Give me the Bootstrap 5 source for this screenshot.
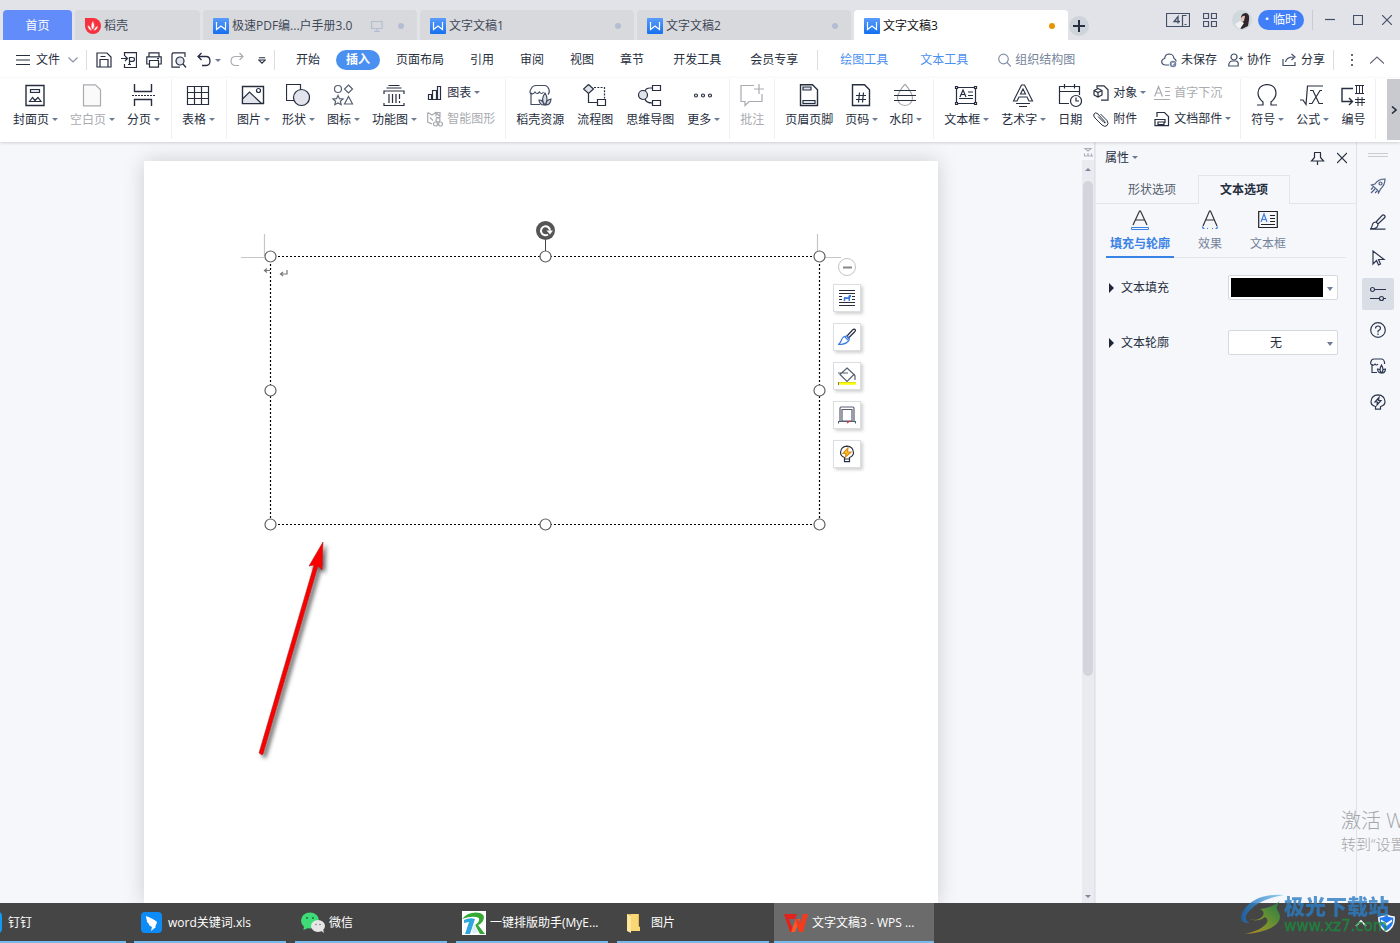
<!DOCTYPE html>
<html lang="zh-CN">
<head>
<meta charset="utf-8">
<meta name="viewport" content="width=device-width, initial-scale=1">
<title>文字文稿3</title>
<link href="https://cdn.jsdelivr.net/npm/bootstrap@5.3.0/dist/css/bootstrap.min.css" rel="stylesheet">
<style>
:root{--ink:#262e40;--line:#e3e5ea;--accent:#3b82e6}
body{font-family:"Open Sans","Noto Sans CJK SC",sans-serif;font-size:12px;line-height:20px;color:var(--ink);background:#f5f7fa;overflow:hidden}
svg{display:block;flex:none;fill:none}
svg:not([stroke]){stroke:currentColor}
svg:not([stroke-width]){stroke-width:1.2}
svg[fill]{fill:#667}
.btn{--bs-btn-padding-x:0;--bs-btn-padding-y:0;--bs-btn-font-size:12px;--bs-btn-border-width:0;--bs-btn-border-radius:0;--bs-btn-color:var(--ink);line-height:20px;white-space:nowrap;flex:none}
.caret::after{content:"";display:inline-block;margin-left:3px;border:3px solid transparent;border-top:3px solid #6d7b94;border-bottom:0;vertical-align:3px;margin-right:-1px}
.off{--bs-btn-color:#a9abb0}
/* title bar */
.titlebar{background:#e1e3e8;height:40px;padding-left:3px;gap:3px}
.doc-tab{height:30px;background:#d8d9dd;border-radius:4px 4px 0 0;padding:2px 13px 0 10px;gap:3px;flex:0 1 214px;color:#3f4858;text-align:left;white-space:nowrap}
.doc-tab.home{flex-basis:69px;background:#618cfa;color:#fff;padding:2px 0 0;text-align:center}
.doc-tab.store{flex-basis:125px}
.doc-tab.current{background:#fff;color:#111}
.dot{width:6px;height:6px;border-radius:50%;background:#b5bdd3}
.current .dot{background:#e69500}
.plus{width:20px;height:20px;border-radius:50%;background:#cfd3da;margin-left:-2px}
.win{height:40px;padding-right:8px;color:#44506a}
.win .grid4{margin:0 15px 0 13px}
.win .sep{margin:0 12px 0 8px;background:#c9ccd3}
.win .max{margin:0 19px 0 18px}
.trial{background:#417ff9;color:#fff;border-radius:10px;padding:0 7px 0 3px;height:20px;margin-left:6px}
.vr-line{width:1px;height:20px;background:#dcdee2;flex:none}
/* menu */
.menubar{height:38px;background:#fff;padding:2px 16px 0}
.file-sep{margin:0 9px 0 8px}
.quick{gap:9px}
.quick-sep{margin:0 8px}
.tool-sep{margin:0 6px}
.menu-tab{color:var(--ink);text-decoration:none;padding:0 13px;white-space:nowrap}
.menu-tab.on{background:#4a90f0;color:#fff;font-weight:700;border-radius:10px;padding:0 10px;margin:0 3px}
.menu-tab.wide{margin-left:3px}
.menu-tab.tool{color:#4a90f0;padding:0 16px}
.search-box{margin-left:14px;gap:4px}
.find{width:64px;border:0;padding:0;background:none;color:#76839b;height:20px;outline:0}
.cloud{gap:11px}
/* ribbon */
.ribbon{height:64px;background:#fff;padding:1px 0 3px 3px;box-shadow:0 1px 3px rgba(0,0,0,.16);position:relative;z-index:2}
.grp{height:60px;padding:5px 12px 0 10px;gap:13px;border-right:1px solid #eff0f2;flex:none}
.grp.g12{gap:12px}
.grp.short{padding-right:10px}
.big{display:flex;flex-direction:column;align-items:center;gap:2px}
.mini{display:flex;align-items:center;gap:4px;height:26px}
.mini svg{width:16px;height:16px}
.stack{margin:-4px -2px 0}
.more{width:13px;height:61px;background:#c8cad0}
/* workspace */
.sheet{width:794px;margin-top:19px;background:#fff;box-shadow:0 0 20px rgba(0,0,0,.17);position:relative}
.marks{position:absolute;left:0;top:0}
.float-tools{position:absolute;left:689px;top:97px;gap:11px}
.float-tools .btn{width:28px;height:28px;background:#fff;border:1px solid #dcdee2;box-shadow:2px 2px 3px rgba(0,0,0,.18)}
.float-tools .fold{width:18px;height:18px;border-radius:50%;border:1px solid #c4c4c4;box-shadow:none;margin-bottom:-3px}
.scroller{width:13px;background:#e9ebf0;border-right:1px solid #dfe1e6}
.ruler-btn{width:12px;background:#f5f7fa}
.thumb{width:10px;height:495px;border-radius:5px;background:#d3d5dc}
/* properties */
.props{width:261px;background:#f5f7fa;border-left:1px solid #e8eaee}
.phead{height:34px;padding:4px 5px 6px 9px}
.ptabs{height:29px;border-bottom:1px solid var(--line);padding-left:102px;margin-top:-1px}
.ptabs .btn{height:29px}
.ptabs .idle{width:92px;margin-left:-92px;--bs-btn-color:#555e6d}
.ptabs .cur{width:92px;border:1px solid var(--line);border-bottom:0;background:#f5f7fa;font-weight:700}
.sub{margin:0 10px;height:54px;border-bottom:1px solid var(--line);gap:24px}
.sub .btn{color:#76839b;height:54px;padding-top:5px;gap:3px}
.sub .sel{color:var(--accent);font-weight:700;padding-left:4px;padding-right:4px;border-bottom:2px solid var(--accent)}
.prop-list{padding:17px 18px 0 13px;gap:30px}
.prop-row{height:25px;gap:7px}
.pick{width:110px;height:25px;border:1px solid #d5d8de;border-radius:2px;background:#fff;position:relative}
.pick select{appearance:none;border:0;background:none;width:100%;height:23px;padding:0 14px 0 0;text-align-last:center;color:var(--ink);font-size:12px}
.pick::after{content:"";position:absolute;right:4px;top:11px;border:3px solid transparent;border-top:4px solid #6d7b94;border-bottom:0;pointer-events:none}
.swatch{width:92px;height:19px;margin:2px;background:#000}
.tri{border:5px solid transparent;border-left:5px solid #1f2737;border-right:0}
.rail{width:44px;border-left:1px solid #e0e3e9;background:#f5f7fa;padding:11px 1px 0 0;gap:4px}
.rail .btn{width:32px;height:32px;border-radius:2px;--bs-btn-color:#2d3850}
.rail .act{background:#d9dde5}
.grip{width:20px;height:4px;border:1px solid #c9ccd2;border-width:1px 0;margin-bottom:9px}
/* overlays */
.activate{position:absolute;right:0;top:809px;width:59px;overflow:hidden;white-space:nowrap;color:#a4a6aa;z-index:3;font-size:15px;font-weight:300;line-height:22px;pointer-events:none}
.activate .head{font-size:20px;line-height:24px}
.stamp{position:absolute;right:11px;bottom:8px;z-index:4;opacity:.8;pointer-events:none}
.stamp .cn{font:900 21px/24px "Noto Sans CJK SC",sans-serif;color:#2b7cc4}
.stamp .en{font:400 15px/18px "DejaVu Sans","Liberation Sans",sans-serif;color:#1b8d3d;-webkit-text-stroke:.5px #1b8d3d}
/* taskbar */
.taskbar{height:40px;background:#454545;overflow:hidden;padding-right:5px}
.taskbar .btn{--bs-btn-color:#fff;--bs-btn-hover-color:#fff;height:40px;width:152px;margin-left:9px;padding:2px 0 0 6px;gap:4px;border-bottom:2px solid #76b9ed;text-align:left}
.taskbar .btn:first-child{margin-left:-26px;margin-right:-1px}
.taskbar .front{width:160px;background:#6b6b6b;margin-left:5px;padding-left:10px}
.tray{gap:11px}
</style>
</head>
<body>
<svg width="0" height="0" class="position-absolute">
 <defs><linearGradient id="wg" x1="0" y1="0" x2="0" y2="1"><stop offset="0" stop-color="#5a9cfb"/><stop offset="1" stop-color="#1670ee"/></linearGradient>
 <linearGradient id="sw" x1="0" y1="0" x2="1" y2="0"><stop offset="0" stop-color="#1565b4"/><stop offset="1" stop-color="#7cc8f2"/></linearGradient>
 <linearGradient id="sg" x1="0" y1="1" x2="1" y2="0"><stop offset="0" stop-color="#d4a017"/><stop offset=".5" stop-color="#7aa52c"/><stop offset="1" stop-color="#1b8a4a"/></linearGradient></defs>
 <symbol id="wdoc" viewBox="0 0 16 16"><rect width="16" height="16" rx="1" fill="url(#wg)" stroke="none"/><path d="M3.500 4v7.500L8 8l4.500 3.500V4" stroke="#fff" stroke-width="1.200"/></symbol>
</svg>
<div class="vh-100 d-flex flex-column position-relative overflow-hidden">

<header class="titlebar d-flex align-items-end">
 <button class="btn doc-tab home">首页</button>
 <button class="btn doc-tab store d-flex align-items-center"><svg width="16" height="16" viewBox="0 0 16 16"><path d="M0 0h8a8 8 0 1 1-8 8z" fill="#f6303d" stroke="none"/><path d="M8 12Q4 9 8 2.500 11 8 8 12zM7 13Q2.500 12 2.500 7 6 8 7 13zM8.500 13Q9 9 13 7.500 13 12 8.500 13z" fill="#fff" stroke="#f6303d" stroke-width=".6"/></svg><span>稻壳</span></button>
 <button class="btn doc-tab d-flex align-items-center"><svg width="16" height="16"><use href="#wdoc"/></svg><span>极速PDF编...户手册3.0</span><svg class="ms-auto me-2" width="12" height="12" viewBox="0 0 12 12" stroke="#b5bdd3"><path d="M.6 1.500h10.500v7H.6zM6 8.500v2.500M3 11.400h6"/></svg><i class="dot ms-1"></i></button>
 <button class="btn doc-tab d-flex align-items-center"><svg width="16" height="16"><use href="#wdoc"/></svg><span>文字文稿1</span><i class="dot ms-auto"></i></button>
 <button class="btn doc-tab d-flex align-items-center"><svg width="16" height="16"><use href="#wdoc"/></svg><span>文字文稿2</span><i class="dot ms-auto"></i></button>
 <button class="btn doc-tab current d-flex align-items-center"><svg width="16" height="16"><use href="#wdoc"/></svg><span>文字文稿3</span><i class="dot ms-auto"></i></button>
 <button class="btn plus mb-1 d-flex align-items-center justify-content-center" aria-label="新建"><svg width="12" height="12" viewBox="0 0 12 12" stroke-width="2"><path d="M6 0v12M0 6h12"/></svg></button>
 <div class="win d-flex align-items-center ms-auto">
  <svg width="24" height="14" viewBox="0 0 24 14"><path d="M16 13.500H.5V.5h23v13H16.500V2.500h4M18.500 11.500h2"/><path d="M12 10.500v-7L8 8.500h6" stroke-width="1.300"/></svg>
  <svg class="grid4" width="14" height="14" viewBox="0 0 14 14"><path d="M.5.5h5v5h-5zM8.500.5h5v5h-5zM.5 8.500h5v5h-5zM8.500 8.500h5v5h-5z"/></svg>
  <svg width="20" height="20" viewBox="0 0 20 20" stroke="none"><circle cx="10" cy="10" r="10" fill="#cfd8dd"/><path d="M9 7q1-4 5-4 4 1 3 7l-1 6-6 3-3-1 4-5z" fill="#30262b"/><path d="M9 8q2-3 4-2l-1 5-3 1z" fill="#e8c3b5"/><path d="M3 14l5-3 4 2-4 6q-3-1-5-5z" fill="#f0f1f4"/></svg>
  <button class="btn trial">・临时</button>
  <span class="vr-line sep"></span>
  <svg width="10" height="10" viewBox="0 0 10 10"><path d="M0 4.500h10"/></svg>
  <svg class="max" width="10" height="10" viewBox="0 0 10 10"><path d="M.5.5h9v9h-9z"/></svg>
  <svg width="10" height="10" viewBox="0 0 10 10"><path d="M0 0l10 10M10 0L0 10"/></svg>
 </div>
</header>

<nav class="menubar d-flex align-items-center">
 <button class="btn d-flex align-items-center"><svg class="me-1" width="16" height="12" viewBox="0 0 16 12"><path d="M0 1.500h14M0 6h14M0 10.500h14"/></svg>文件<svg class="ms-2" width="10" height="6" viewBox="0 0 10 6" stroke="#8b93a3"><path d="M.5.5L5 5 9.500.5"/></svg></button>
 <span class="vr-line file-sep"></span>
 <div class="quick d-flex align-items-center">
  <button class="btn" aria-label="保存"><svg width="16" height="16" viewBox="0 0 16 16"><path d="M1 1h10l4 4v10H1zM4 15V7.500h8V15M4.500 4.500h5"/></svg></button>
  <button class="btn" aria-label="输出为PDF"><svg width="16" height="16" viewBox="0 0 16 16"><path d="M3.500 4V.6h12v15h-12V12M0 6.500h6.500M4 4l2.500 2.500L4 9M7 12.500h3M8.500 12V5.500h3q2 0 2 1.800 0 2-2 2h-3"/></svg></button>
  <button class="btn" aria-label="打印"><svg width="16" height="16" viewBox="0 0 16 16"><path d="M3 4.500V.8h10v3.700M3.500 12H.8V4.800h14.400V12h-2.700M3.500 8.500h9v6.700h-9zM11 6.700h2"/></svg></button>
  <button class="btn" aria-label="打印预览"><svg width="16" height="16" viewBox="0 0 16 16"><path d="M14 5V.8H2L1 2v13.200h8"/><circle cx="9" cy="9" r="4" fill="#e1e4ea"/><path d="M12 12l3 3.500"/></svg></button>
  <button class="btn d-flex align-items-center caret" aria-label="撤销"><svg width="16" height="16" viewBox="0 0 16 16" stroke-width="1.300"><path d="M5.500 1L2 4.500 5.500 8M2 4.500h8q4 0 4 4.500t-4 4.500H6"/></svg></button>
  <button class="btn off" aria-label="恢复"><svg width="16" height="16" viewBox="0 0 16 16"><path d="M10.500 1L14 4.500 10.500 8M14 4.500H7q-5 0-5 4.500t5 4.500h3"/></svg></button>
  <button class="btn ms-1" aria-label="自定义"><svg width="8" height="9" viewBox="0 0 9 9"><path d="M1 1.500h7M1 4l3.500 3.500L8 4z"/></svg></button>
 </div>
 <span class="vr-line quick-sep"></span>
 <a class="menu-tab" href="#">开始</a><a class="menu-tab on" href="#">插入</a><a class="menu-tab" href="#">页面布局</a><a class="menu-tab" href="#">引用</a><a class="menu-tab" href="#">审阅</a><a class="menu-tab" href="#">视图</a><a class="menu-tab" href="#">章节</a><a class="menu-tab wide" href="#">开发工具</a><a class="menu-tab wide" href="#">会员专享</a>
 <span class="vr-line tool-sep"></span>
 <a class="menu-tab tool" href="#">绘图工具</a><a class="menu-tab tool" href="#">文本工具</a>
 <label class="search-box d-flex align-items-center"><svg width="13" height="14" viewBox="0 0 13 14" stroke="#8490a6"><circle cx="5.500" cy="6" r="4.800"/><path d="M9 9.500l4 4"/></svg><input class="find" type="text" value="组织结构图" aria-label="查找命令"></label>
 <div class="cloud d-flex align-items-center ms-auto">
  <button class="btn d-flex align-items-center gap-1"><svg width="16" height="16" viewBox="0 0 16 16" stroke="#44506a"><path d="M8 13H4Q.7 12.500.7 9.500q.3-2.500 3-3Q4 2 8.500 2q4 .3 4.500 4.500 2 .7 2.200 3"/><circle cx="12" cy="12" r="3.300" fill="#7180a0" stroke="none"/><path d="M10.700 10.700l2.600 2.600M13.300 10.700l-2.600 2.600" stroke="#fff"/></svg>未保存</button>
  <button class="btn d-flex align-items-center gap-1"><svg width="15" height="14" viewBox="0 0 15 14" stroke="#44506a"><circle cx="6" cy="4" r="3"/><path d="M.7 13q0-5 4-5h3q2 0 2.500 2v3zM11 5.500h4M13 3.500v4"/></svg>协作</button>
  <button class="btn d-flex align-items-center gap-1"><svg width="15" height="14" viewBox="0 0 15 14" stroke="#44506a"><path d="M1 6v6.500h12V9M3.500 9q1-5 8-5M9.500 1L13 4l-3.500 3"/></svg>分享</button>
 </div>
 <span class="vr-line mx-2"></span>
 <button class="btn mx-2" aria-label="更多"><svg width="4" height="14" viewBox="0 0 4 14" stroke="none" fill="#667"><path d="M1 1h2v2H1zM1 6h2v2H1zM1 11h2v2H1z"/></svg></button>
 <button class="btn ms-2" aria-label="收起"><svg width="14" height="8" viewBox="0 0 14 8" stroke="#667"><path d="M0 7.500L7 1l7 6.500"/></svg></button>
</nav>

<div class="ribbon d-flex">
 <div class="grp d-flex align-items-start">
  <button class="btn big"><svg width="24" height="24" viewBox="0 0 24 24"><path d="M3 1.500h18v20H3z" stroke-width="1.400"/><path d="M7.500 5.500h9v3h-9z" fill="#e1e4ea"/><path d="M6.500 17.500l3-4 2.500 3 3-3 3 4z"/></svg><span class="caret">封面页</span></button>
  <button class="btn big off"><svg width="24" height="24" viewBox="0 0 24 24"><path d="M3.500.8h12l5 5v16h-17z" fill="#fafafa"/></svg><span class="caret">空白页</span></button>
  <button class="btn big"><svg width="24" height="24" viewBox="0 0 24 24"><path d="M3.500 0v7.500h17V0M3.500 22v-6.500h17V22" stroke-width="1.400"/><path d="M1 11.500h23" stroke-dasharray="2 1"/></svg><span class="caret">分页</span></button>
 </div>
 <div class="grp d-flex align-items-start">
  <button class="btn big"><svg width="24" height="24" viewBox="0 0 24 24"><path d="M1.500 2.500h21v18h-21zM1.500 8.500h21M1.500 14.500h21M8.500 2.500v6M15.500 2.500v6M8.500 8.500v12M15.500 8.500v12"/></svg><span class="caret">表格</span></button>
 </div>
 <div class="grp d-flex align-items-start">
  <button class="btn big"><svg width="24" height="24" viewBox="0 0 24 24"><path d="M1.500 2.500h21v17h-21z" stroke-width="1.400"/><path d="M1.500 15l7-7 12 11.500h-19z" fill="#e1e4ea"/><circle cx="17.500" cy="6.500" r="2"/></svg><span class="caret">图片</span></button>
  <button class="btn big"><svg width="24" height="24" viewBox="0 0 24 24"><path d="M.5.5h14v16H.5z"/><circle cx="15.500" cy="13.500" r="8" fill="#e1e4ea"/></svg><span class="caret">形状</span></button>
  <button class="btn big"><svg width="24" height="24" viewBox="0 0 24 24" stroke="#555f70"><circle cx="7" cy="5" r="3.500"/><path d="M17.500 1l4 4-4 4-4-4zM17.500 12.500l4 7.500h-8zM7 11.500l1.500 3.200 3.500.3-2.600 2.300.8 3.400L7 19l-3.200 1.700.8-3.400L2 15l3.500-.3z"/></svg><span class="caret">图标</span></button>
  <button class="btn big"><svg width="24" height="24" viewBox="0 0 24 24"><path d="M6.500 1.500h11M4.500 4h15M2 10V7h20v3M2 19v2.500h20V19M7 10v9M10.500 10v9M14 10v9M17.500 10v5M17.500 17v2"/></svg><span class="caret">功能图</span></button>
  <div class="stack d-flex flex-column"><button class="btn mini"><svg viewBox="0 0 16 16"><path d="M1.500 9.500h3v5h-3zM5.500 5.500h4v9h-4zM10.500 1.500h3v13h-3z"/></svg><span class="caret">图表</span></button><button class="btn mini off"><svg viewBox="0 0 16 16"><path d="M.7 1.500L5 4l4-2.500v4M.7 1.500v9.500L5 13M3 6.500l3 3M9 6.500h4V1.500H9l4 4"/><circle cx="11" cy="9" r="2"/><circle cx="8.500" cy="13" r="2"/><circle cx="13.500" cy="13" r="2"/></svg><span>智能图形</span></button></div>
 </div>
 <div class="grp short d-flex align-items-start">
  <button class="btn big"><svg width="24" height="24" viewBox="0 0 24 24" stroke="#454e60"><path d="M3 10v10.500h9M3 10q-2-2 0-5Q4.500 1.500 8 1.500h9q3 .5 4 4 1 3-1 5M3 9q2 2 4-1 2 3 4.500 0 2 3 4 0"/><path d="M17 21q-5-5 0-12 4 6 0 12zM16 21q-4.500 0-5-5 4 0 5 5zM18 21q4.500 0 5-6-5 1-5 6z" fill="#d9dde5"/></svg><span>稻壳资源</span></button>
  <button class="btn big"><svg width="24" height="24" viewBox="0 0 24 24"><path d="M5.500.5l5 4.500-5 4.500L.5 5z" fill="#e1e4ea"/><path d="M5.500 9.500v9h9M14.500 15.500h8v6h-8z"/><path d="M11 3.500h10.500v11" stroke-dasharray="2 1.300"/></svg><span>流程图</span></button>
  <button class="btn big"><svg width="24" height="24" viewBox="0 0 24 24"><circle cx="5" cy="11" r="4.500" fill="#e1e4ea"/><path d="M14.500 1.500h8v5h-8zM14.500 16.500h8v5h-8z"/><path d="M14.500 4H12Q8 4 7 7M7 15q1 4 7.500 4"/></svg><span>思维导图</span></button>
  <button class="btn big"><svg width="24" height="24" viewBox="0 0 24 24"><circle cx="5" cy="11.500" r="1.500"/><circle cx="12" cy="11.500" r="1.500"/><circle cx="19" cy="11.500" r="1.500"/></svg><span class="caret">更多</span></button>
 </div>
 <div class="grp short d-flex align-items-start">
  <button class="btn big off"><svg width="24" height="24" viewBox="0 0 24 24"><path d="M14 1.500H1v16h4v4l4-4h13V10M19 0v10M14 5h10"/></svg><span>批注</span></button>
 </div>
 <div class="grp g12 d-flex align-items-start">
  <button class="btn big"><svg width="24" height="24" viewBox="0 0 24 24"><path d="M3.500.8h12l5 5v15.700h-17z" stroke-width="1.400"/><path d="M6 3h8v3H6zM6 16.500h12v3H6z" fill="#e1e4ea"/></svg><span>页眉页脚</span></button>
  <button class="btn big"><svg width="24" height="24" viewBox="0 0 24 24"><path d="M3.500.8h12l5 5v15.700h-17z" stroke-width="1.400"/><path d="M7 11.500h10M7 15.500h10M10.500 8.500l-1 10M14.500 8.500l-1 10"/></svg><span class="caret">页码</span></button>
  <button class="btn big"><svg width="24" height="24" viewBox="0 0 24 24"><path d="M12 0q-8 9.500-7.500 14.500Q5.500 21 12 21.500q6.500-.5 7.500-7Q20 9.500 12 0z" stroke="#a9abb0"/><path d="M1 6.500h22M1 11.500h22M1 16.500h22"/></svg><span class="caret">水印</span></button>
 </div>
 <div class="grp d-flex align-items-start">
  <button class="btn big"><svg width="24" height="24" viewBox="0 0 24 24"><path d="M3 3.500h18M3 19.500h18M2.500 4v15M21.500 4v15M14 8h5M14 11.500h5M5 14.500h14" /><path d="M6 13l3-7 3 7M7 10.500h4"/><path d="M1.500 2.500h2v2h-2zM20.500 2.500h2v2h-2zM1.500 18.500h2v2h-2zM20.500 18.500h2v2h-2z" fill="#fff"/></svg><span class="caret">文本框</span></button>
  <button class="btn big"><svg width="24" height="24" viewBox="0 0 24 24"><path d="M2.500 17L10.500 1h3l8 16H18l-2-4H8l-2 4zM9.500 10h5L12 5z" stroke-width="1.100"/><path d="M5 19.500h14M8 22.500h8"/></svg><span class="caret">艺术字</span></button>
  <button class="btn big"><svg width="24" height="24" viewBox="0 0 24 24"><path d="M11 19.500H1.500v-17h20V11M1.500 7.500h20M6.500 0v4.500M16.500 0v4.500"/><circle cx="18" cy="17" r="5.500"/><path d="M18 13.500V17h3"/></svg><span>日期</span></button>
  <div class="stack d-flex flex-column"><button class="btn mini"><svg viewBox="0 0 16 16"><path d="M4 3V.8h7l4 4v10.400H8"/><path d="M5 3.500l4 2v4.500l-4 2-4-2V5.500zM1 5.500l4 2 4-2M5 7.500V12"/></svg><span class="caret">对象</span></button><button class="btn mini"><svg viewBox="0 0 16 16" stroke-width="1"><path d="M5 5.500l6 6q2 1.500.7-1L5 3Q2.500.5 1 3 0 5 2 7l7 7q3 2.500 5 .5 2-2 0-5L7.500 3"/></svg><span>附件</span></button></div>
  <div class="stack d-flex flex-column"><button class="btn mini off"><svg viewBox="0 0 16 16"><path d="M.7 11.500L4.500 1.500l4 10M2 8h5M11 2.500h5M11 6.500h5M11 10.500h5M0 14.500h16"/></svg><span>首字下沉</span></button><button class="btn mini"><svg viewBox="0 0 16 16"><path d="M3 6V1.500h7.500l4 4v9.200H1V11M1 11V8.500h10V12M4 11h6v2.500H4z"/></svg><span class="caret">文档部件</span></button></div>
 </div>
 <div class="grp short d-flex align-items-start">
  <button class="btn big"><svg width="24" height="24" viewBox="0 0 24 24"><path d="M2 21h6v-3Q3 14 3 9q.5-8 9-8.500Q20.500 1 21 9q0 5-5 9v3h6"/></svg><span class="caret">符号</span></button>
  <button class="btn big"><svg width="24" height="24" viewBox="0 0 24 24"><path d="M0 16h3l3 4.500L7.500 2H23M10 6.500h3l6 13h4M22 6.500h-2L12 19.500h-3"/></svg><span class="caret">公式</span></button>
  <button class="btn big"><svg width="24" height="24" viewBox="0 0 24 24"><path d="M12 4.500H1v13h10M8 14l3.500 3.500L8 21" stroke-width="1.400"/><path d="M14 1.500h9M14 9.500h9M15.500 1.500v8M18.500 1.500v8M21.500 1.500v8M14 15.500h10M14 18.500h10M17 13v9M21 13v9" stroke-width="1"/></svg><span>编号</span></button>
 </div>
 <button class="btn more ms-auto d-flex align-items-center justify-content-center" aria-label="向右滚动"><svg width="6" height="8" viewBox="0 0 6 8" stroke-width="1.600"><path d="M1 .5L5 4 1 7.500"/></svg></button>
</div>

<div class="d-flex flex-fill overflow-hidden">
 <main class="flex-fill d-flex justify-content-center overflow-hidden">
  <div class="sheet">
   <svg class="marks" width="794" height="742" viewBox="0 0 794 742">
    <defs><filter id="sh" x="-50%" y="-10%" width="250%" height="120%"><feDropShadow dx="3" dy="3" stdDeviation="2" flood-opacity=".6"/></filter></defs>
    <path d="M97 96.500h23M120.500 73v22M673.500 73v22M680 96.500h17" stroke="#c6c6c6"/>
    <path d="M126 95.500h550M126 363.500h550M126.500 95v268M675.500 95v268" stroke="#000" stroke-dasharray="2 2"/>
    <path d="M401.500 79v12" stroke="#444" stroke-width="1"/>
    <g fill="#fff" stroke="#606060"><circle cx="126.500" cy="95.500" r="5.500"/><circle cx="401.500" cy="95.500" r="5.500"/><circle cx="675.500" cy="95.500" r="5.500"/><circle cx="126.500" cy="229.500" r="5.500"/><circle cx="675.500" cy="229.500" r="5.500"/><circle cx="126.500" cy="363.500" r="5.500"/><circle cx="401.500" cy="363.500" r="5.500"/><circle cx="675.500" cy="363.500" r="5.500"/></g>
    <circle cx="401.500" cy="69.500" r="9.500" fill="#555" stroke="none"/><path d="M404 73.500a4.500 4.500 0 1 1 2-4" stroke="#fff" stroke-width="2"/><path d="M402.500 69.500h6.500l-3 4z" fill="#fff" stroke="none"/>
    <path d="M126 109.500h-5M123 107.500l-2.500 2 2.500 2M143 109v4h-6M139 111l-2.500 2 2.500 2" stroke="#777"/>
    <g filter="url(#sh)" fill="#fb0505" stroke="none"><path d="M179 381l-14 24 5-1-55 188 3 2 1-1 55-188 4 4z" stroke="#9c1010" stroke-width=".5"/></g>
   </svg>
   <div class="float-tools d-flex flex-column align-items-center">
    <button class="btn fold d-flex align-items-center justify-content-center" aria-label="收起"><svg width="9" height="3" viewBox="0 0 9 3"><path d="M0 1.500h9" stroke="#888" stroke-width="2"/></svg></button>
    <button class="btn d-flex align-items-center justify-content-center" aria-label="布局选项"><svg width="18" height="18" viewBox="0 0 18 18"><path d="M1 1.500h16M1 4.500h16M1 7.500h3M1 10.500h3M14 7.500h3M14 10.500h3M1 13.500h16M1 16.500h16"/><path d="M5.500 12l.5-4 4 .3L11 6h2v2l-1 .5V12h-1.500V10L7.500 10l-.5 2z" fill="#3b7ddd" stroke="none"/></svg></button>
    <button class="btn d-flex align-items-center justify-content-center" aria-label="形状样式"><svg width="18" height="18" viewBox="0 0 18 18"><path d="M9 8l5.500-6q2-1.500 2.500-.5 1 1-.5 2.500l-6 6z"/><path d="M9 8L11 10q1 1.500-1 3.500-3 3-9.500 3 2-1.500 3-4.500Q5 8 9 8zM7 9l3 3" stroke="#3b7ddd"/></svg></button>
    <button class="btn d-flex align-items-center justify-content-center" aria-label="形状填充"><svg width="18" height="18" viewBox="0 0 18 18"><path d="M9 1l7 6.500-7 7-7-7zM0 6h10M16 7l1 2v4" stroke="#555e70"/><path d="M0 15.500h18M.5 15v3" stroke="#777"/><path d="M1 16.500h17" stroke="#ff0" stroke-width="2.500"/></svg></button>
    <button class="btn d-flex align-items-center justify-content-center" aria-label="形状轮廓"><svg width="18" height="18" viewBox="0 0 18 18"><path d="M2 15V2.500q0-1.500 1-1.500h12q1 0 1 1.500V15M4 15V3.500h10V15zM0 15.500h18M.5 15v2.500M17.500 15v2.500" stroke="#555e70"/><path d="M9 17l3-2" stroke="#e33"/></svg></button>
    <button class="btn d-flex align-items-center justify-content-center" aria-label="智能推荐"><svg width="18" height="18" viewBox="0 0 18 18"><path d="M6.500 14v-1.500Q2.500 11 2.500 7.500 3 1.500 9 1.200q6 .3 6.500 6.300 0 3.500-4 5V14zM6.500 14v2.700h5V14"/><path d="M10 3L5 8.500h3L7.500 12 13 7H9.500z" fill="#ffd21f" stroke="#e08a1a"/></svg></button>
   </div>
  </div>
 </main>
 <div class="scroller d-flex flex-column align-items-center">
  <span class="ruler-btn"><svg class="mx-auto" width="10" height="18" viewBox="0 0 10 18" stroke="#a8afbf"><path d="M2 6.500h6l-3 2.500zM1 14h9M1.500 14v-2.500M5 14v-3M8.500 14v-2.500"/></svg></span>
  <svg class="mt-1 mb-2" width="8" height="9" viewBox="0 0 8 9"><path d="M1 7l3-3 3 3z" fill="#7d879b" stroke="none"/></svg>
  <span class="thumb"></span>
  <svg class="mt-auto" width="8" height="11" viewBox="0 0 8 11"><path d="M1 3l3 3 3-3z" fill="#7d879b" stroke="none"/></svg>
 </div>
 <aside class="props">
  <div class="phead d-flex align-items-center">
   <button class="btn caret">属性</button>
   <button class="btn ms-auto" aria-label="固定"><svg width="15" height="15" viewBox="0 0 15 15"><path d="M4 1.500h7M4.500 2v4.500L1.500 10h12l-3-3.500V2M7.500 10v4"/></svg></button>
   <button class="btn ms-2 px-1" aria-label="关闭"><svg width="10" height="12" viewBox="1 0 10 12"><path d="M1 1l10 10M11 1L1 11"/></svg></button>
  </div>
  <div class="ptabs d-flex"><button class="btn idle">形状选项</button><button class="btn cur">文本选项</button></div>
  <div class="sub d-flex">
   <button class="btn sel d-flex flex-column align-items-center"><svg width="20" height="22" viewBox="0 0 20 22"><path d="M3 16L9.500 2h1L17 16M5.500 11h9" stroke="#333"/><path d="M1.500 18.500h17v2h-17z" stroke="#3b82e6" stroke-width="1"/></svg>填充与轮廓</button>
   <button class="btn d-flex flex-column align-items-center"><svg width="20" height="22" viewBox="0 0 20 22"><path d="M3 17L9.500 2h1L17 17M5.500 11h9" stroke="#333"/><path d="M2.500 17.500q0 2 2 2M7 19.500h1M12 19.500h1M15.500 19.500q2 0 2-2" stroke="#3b82e6"/></svg>效果</button>
   <button class="btn ms-1 d-flex flex-column align-items-center"><svg width="20" height="22" viewBox="0 0 20 22"><path d="M.7 2.500h18.600v16H.7zM12 6.500h5M12 9.500h5M12 12.500h5M3 15.500h14" stroke="#222"/><path d="M3 13l3-8 3 8M4 10.500h4" stroke="#3b7ddd"/></svg>文本框</button>
  </div>
  <div class="prop-list d-flex flex-column">
   <div class="prop-row d-flex align-items-center"><span class="tri"></span><span>文本填充</span><button class="btn pick ms-auto" aria-label="文本填充颜色"><span class="swatch d-block"></span></button></div>
   <div class="prop-row d-flex align-items-center"><span class="tri"></span><label for="ol">文本轮廓</label><div class="pick ms-auto"><select id="ol"><option>无</option></select></div></div>
  </div>
 </aside>
 <div class="rail d-flex flex-column align-items-center">
  <span class="grip"></span>
  <button class="btn d-flex align-items-center justify-content-center" aria-label="快捷"><svg width="16" height="16" viewBox="0 0 16 16" stroke="#4f6083"><path d="M15 1Q8 1 5 6L1.500 7 4 9l4 3.500.5 2.500 2-4Q15 7 15 1zM1 11.500l2-2M1 15l4-4M5 15l2-2"/><circle cx="10.500" cy="5.500" r="1.500"/></svg></button>
  <button class="btn d-flex align-items-center justify-content-center" aria-label="样式"><svg width="16" height="16" viewBox="0 0 16 16"><path d="M6 8l6.500-7q1-.5 2 .5t.3 2L8 10zM6 8q-3 0-3.500 2.500T.8 14.500H4Q8 14 8 10M0 15.200h15.500"/></svg></button>
  <button class="btn d-flex align-items-center justify-content-center" aria-label="选择"><svg width="16" height="16" viewBox="0 0 16 16"><path d="M3 1v13l3.500-3.500L8.500 15l2-1-2-4.500H14z"/></svg></button>
  <button class="btn act d-flex align-items-center justify-content-center" aria-label="属性"><svg width="16" height="16" viewBox="0 0 16 16"><circle cx="2.500" cy="3.500" r="2"/><path d="M4.500 3.500H16M0 12.500h9.500M14 12.500h2"/><circle cx="11.500" cy="12.500" r="2"/></svg></button>
  <button class="btn d-flex align-items-center justify-content-center" aria-label="帮助"><svg width="16" height="16" viewBox="0 0 16 16"><circle cx="8" cy="8" r="7.300"/><path d="M5.500 6.500Q5.500 4 8 4t2.500 2.200Q10.500 7.500 8 9v1.500M8 11.500V13"/></svg></button>
  <button class="btn d-flex align-items-center justify-content-center" aria-label="稻壳"><svg width="16" height="16" viewBox="0 0 16 16"><path d="M2 7v7.500h5M2 7Q0 6 1 3.500 1.500 1 4 1h8q2 .5 2.500 3v2M2 6.500q1.500 1.500 3-.5 1.500 2 3 0"/><path d="M11.500 15q-3-3 0-8 3 5 0 8zM11 15q-3 0-3.500-4 3 0 3.500 4zM12 15q3 0 3.500-4-3 0-3.500 4z"/></svg></button>
  <button class="btn d-flex align-items-center justify-content-center" aria-label="推荐"><svg width="16" height="16" viewBox="0 0 16 16"><path d="M5.500 12.500q-4.500-1-4.500-5Q1.500 1 8 .8q6.500.2 7 6.700 0 4-4.500 5v2.700h-5z"/><path d="M9 3.500L5 8h2.500L7 11l4-4.500H8.500z"/></svg></button>
 </div>
</div>

<div class="activate"><div class="head">激活 W</div><div>转到“设置</div></div>

<footer class="taskbar d-flex">
 <button class="btn d-flex align-items-center"><svg width="24" height="22" viewBox="0 0 24 22"><rect x="1" width="21" height="21" rx="4" fill="#129bf5" stroke="none"/></svg>钉钉</button>
 <button class="btn d-flex align-items-center"><svg width="24" height="22" viewBox="0 0 24 22"><rect x="1" width="21" height="21" rx="4" fill="#0d8cf7" stroke="none"/><path d="M6 4q8 3 11 6-1 4-2 4l1 1-5 4 1-4q-4-2-3-3-3-3-2-3-1-3-1-5z" fill="#fff" stroke="none"/></svg>word关键词.xls</button>
 <button class="btn d-flex align-items-center"><svg width="24" height="22" viewBox="0 0 24 22" stroke="none"><ellipse cx="9" cy="8.500" rx="9" ry="8" fill="#3ddc77"/><path d="M3 14l-.5 4L7 16z" fill="#3ddc77"/><ellipse cx="17" cy="14" rx="7" ry="6" fill="#e6e6e6"/><path d="M19 18l4 3-1-4z" fill="#e6e6e6"/><g fill="#17753b"><circle cx="6" cy="6" r="1"/><circle cx="12" cy="6" r="1"/></g><g fill="#777"><circle cx="15" cy="12.500" r=".8"/><circle cx="19" cy="12.500" r=".8"/></g></svg>微信</button>
 <button class="btn d-flex align-items-center"><svg width="24" height="24" viewBox="0 0 24 24" stroke="none"><path d="M0 0h24v24H0z" fill="#fff"/><path d="M0 8Q7 0 18 2q6 2 3 8-2 3-5 4l7 9h-5l-5-9q5-3 4-7-6-3-17 1z" fill="#35a936"/><path d="M2 9q6-3 11-1L8 23H3L7 11 2 12z" fill="#30a7dc"/><path d="M10 18l3-5 3 8-5 2z" fill="#ddeefa"/></svg>一键排版助手(MyE...</button>
 <button class="btn d-flex align-items-center"><svg width="24" height="22" viewBox="0 0 24 22" stroke="none"><path d="M4 2h12v17H4z" fill="#e8b84a"/><path d="M4 2l4 2v17l-4-2z" fill="#ffe69a"/><path d="M8 2h7v12l2 1v4H8z" fill="#f9d774"/></svg>图片</button>
 <button class="btn front d-flex align-items-center"><svg width="24" height="18" viewBox="0 0 24 18" stroke="none"><path d="M0 0h13l-2 5H5l5 13H6z" fill="#e3221d"/><path d="M12 5h4l-5 13H7z" fill="#ff5a26"/><path d="M11 5l4 13h4L24 0h-5l-3 10-2-5z" fill="#f63a1e"/></svg>文字文稿3 - WPS ...</button>
 <div class="tray ms-auto d-flex align-items-center text-white"><svg width="12" height="8" viewBox="0 0 12 8" stroke-width="1.600"><path d="M1 7l5-5 5 5"/></svg><svg width="17" height="18" viewBox="0 0 17 18" stroke="none"><path d="M8.500 1q4 2 7.500 2 1 10-7.500 14.500Q0 13 1 3q3.500 0 7.500-2z" fill="#2679f5" stroke="#fff" stroke-width="1.500"/><path d="M3 5.500l5.500 3.500L14 5.500v2L8.500 12 3 7.500z" fill="#fff"/></svg></div>
</footer>

<div class="stamp d-flex align-items-center"><svg width="44" height="42" viewBox="0 0 44 42" stroke="none"><path d="M44 2Q15 0 3 18q-6 12 6 12Q2 25 10 17 20 6 44 2z" fill="url(#sw)"/><path d="M10 26q6 3 12-2 4-5-2-8 12-1 20-8-6 6-1 12 4 8-8 15-10 5-26 6 14-3 20-9 5-5 0-8-5 5-15 2z" fill="url(#sg)"/></svg><div><div class="cn">极光下载站</div><div class="en">www.xz7.com</div></div></div>
</div>
<script src="https://cdn.jsdelivr.net/npm/bootstrap@5.3.0/dist/js/bootstrap.bundle.min.js"></script>
</body>
</html>
